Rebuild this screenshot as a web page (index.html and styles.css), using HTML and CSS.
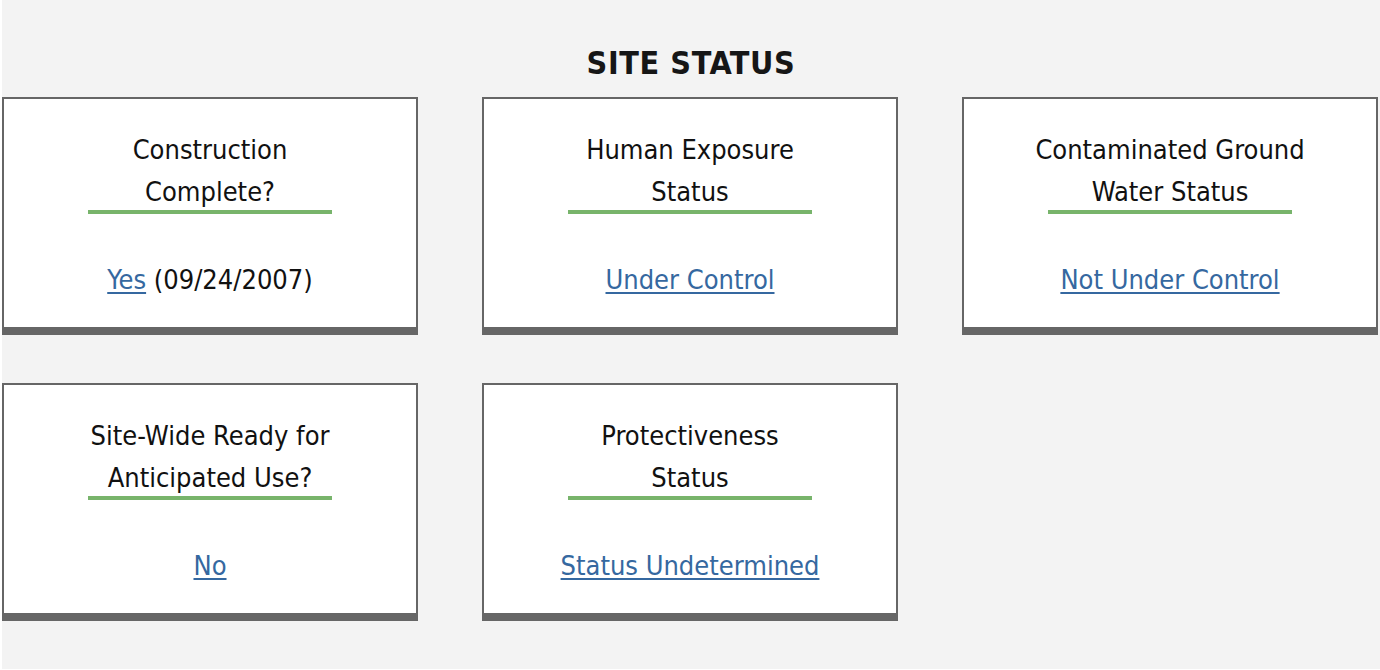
FILE: index.html
```html
<!DOCTYPE html>
<html>
<head>
<meta charset="utf-8">
<link rel="stylesheet" href="styles.css">
</head>
<body>
<div class="page">
  <h2 class="title">SITE STATUS</h2>
  <div class="grid">
    <div class="card">
      <div class="label">Construction<br>Complete?</div>
      <div class="rule"></div>
      <div class="value"><a href="#">Yes</a> (09/24/2007)</div>
    </div>
    <div class="card">
      <div class="label">Human Exposure<br>Status</div>
      <div class="rule"></div>
      <div class="value"><a href="#">Under Control</a></div>
    </div>
    <div class="card">
      <div class="label">Contaminated Ground<br>Water Status</div>
      <div class="rule"></div>
      <div class="value"><a href="#">Not Under Control</a></div>
    </div>
    <div class="card">
      <div class="label">Site-Wide Ready for<br>Anticipated Use?</div>
      <div class="rule"></div>
      <div class="value"><a href="#">No</a></div>
    </div>
    <div class="card">
      <div class="label">Protectiveness<br>Status</div>
      <div class="rule"></div>
      <div class="value"><a href="#">Status Undetermined</a></div>
    </div>
  </div>
</div>
</body>
</html>
```

FILE: styles.css
```css
html, body {
  margin: 0;
  padding: 0;
  background: #ffffff;
}
.page {
  margin-left: 2px;
  width: 1378px;
  height: 669px;
  background: #f3f3f3;
  font-family: "DejaVu Sans Condensed", "DejaVu Sans", sans-serif;
  color: #111;
  overflow: hidden;
}
.title {
  margin: 0 0 15px 0;
  padding-top: 44px;
  text-align: center;
  font-size: 32px;
  line-height: 38px;
  font-weight: bold;
  letter-spacing: 0.6px;
  color: #161616;
}
.grid {
  display: grid;
  grid-template-columns: repeat(3, 416px);
  column-gap: 64px;
  row-gap: 48px;
}
.card {
  box-sizing: border-box;
  height: 238px;
  background: #fff;
  border: 2px solid #666;
  border-bottom-width: 8px;
  text-align: center;
  padding-top: 30px;
}
.label {
  font-size: 27px;
  line-height: 42px;
}
.rule {
  width: 244px;
  height: 4px;
  margin: -3px auto 0;
  background: #78b46b;
}
.value {
  margin-top: 45px;
  font-size: 27px;
  line-height: 42px;
}
.value a {
  color: #3568a0;
  text-decoration: underline;
  text-underline-offset: 3px;
}
```
